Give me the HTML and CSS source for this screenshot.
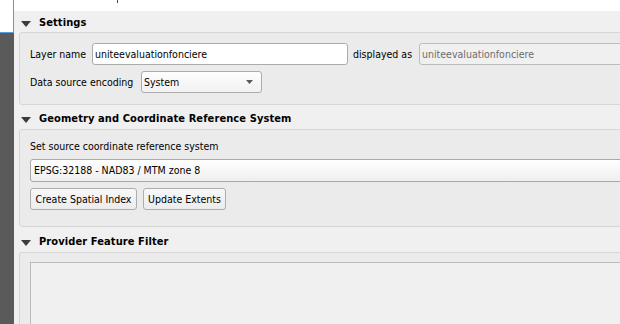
FILE: index.html
```html
<!DOCTYPE html>
<html>
<head>
<meta charset="utf-8">
<link rel="stylesheet" href="styles.css">
</head>
<body>
<div class="screen">
  <div class="side">
    <div class="side-top"></div>
    <div class="side-fill"></div>
  </div>
  <div class="main">
    <div class="topstrip"><span class="tick"></span></div>

    <div class="section-head section-head--first">
      <svg class="caret" width="10" height="6" viewBox="0 0 10 6"><polygon points="0,0 10,0 5,6" fill="#3c3c3c"/></svg>
      <span>Settings</span>
    </div>
    <div class="group group--settings">
      <div class="row">
        <span class="label label--name">Layer name</span>
        <div class="field field--name">uniteevaluationfonciere</div>
        <span class="label label--as">displayed as</span>
        <div class="field field--disabled">uniteevaluationfonciere</div>
      </div>
      <div class="row">
        <span class="label label--enc">Data source encoding</span>
        <div class="combo combo--enc"><span class="combo-text">System</span><svg class="combo-arrow" width="7" height="4" viewBox="0 0 7 4"><polygon points="0,0 7,0 3.5,4" fill="#5a5a5a"/></svg></div>
      </div>
    </div>

    <div class="section-head">
      <svg class="caret" width="10" height="6" viewBox="0 0 10 6"><polygon points="0,0 10,0 5,6" fill="#3c3c3c"/></svg>
      <span>Geometry and Coordinate Reference System</span>
    </div>
    <div class="group group--crs">
      <div class="label label--crs">Set source coordinate reference system</div>
      <div class="combo combo--crs"><span class="combo-text">EPSG:32188 - NAD83 / MTM zone 8</span></div>
      <div class="buttons">
        <div class="btn btn--index">Create Spatial Index</div>
        <div class="btn btn--extents">Update Extents</div>
      </div>
    </div>

    <div class="section-head section-head--filter">
      <svg class="caret" width="10" height="6" viewBox="0 0 10 6"><polygon points="0,0 10,0 5,6" fill="#3c3c3c"/></svg>
      <span>Provider Feature Filter</span>
    </div>
    <div class="group group--filter">
      <div class="textarea"></div>
    </div>
  </div>
</div>
</body>
</html>
```

FILE: styles.css
```css
html, body {
  margin: 0;
  padding: 0;
}
body {
  background: #f0f0f0;
  font-family: "DejaVu Sans Condensed", "DejaVu Sans", sans-serif;
  font-stretch: condensed;
  font-size: 10.5px;
  line-height: 13px;
  color: #000;
}
.screen {
  display: flex;
  width: 620px;
  height: 324px;
  overflow: hidden;
}
.side {
  width: 14px;
  flex-shrink: 0;
  display: flex;
  flex-direction: column;
}
.side-top {
  height: 33px;
  background: #fff;
  border-right: 1px solid #5a9ad8;
  border-bottom: 1px solid #5a9ad8;
  box-sizing: border-box;
}
.side-fill {
  flex: 1;
  background: #5a5a5a;
}
.main {
  flex: 1;
  min-width: 0;
  display: flex;
  flex-direction: column;
  overflow: hidden;
}
.topstrip {
  height: 11px;
  flex-shrink: 0;
  background: #fff;
}
.tick {
  display: block;
  width: 1px;
  height: 3px;
  margin-left: 103px;
  background: #2b4f7c;
}
.section-head {
  display: flex;
  align-items: center;
  gap: 8px;
  height: 24px;
  padding-left: 7px;
  padding-top: 3px;
  box-sizing: border-box;
  flex-shrink: 0;
  font-weight: bold;
  font-size: 11px;
  letter-spacing: 0.1px;
  color: #000;
}
.section-head--first {
  height: 21px;
  padding-top: 1px;
}
.section-head--filter {
  height: 25px;
}
.caret {
  display: block;
  margin-top: 3px;
}
.group {
  margin-left: 5px;
  width: 640px;
  box-sizing: border-box;
  flex-shrink: 0;
  border: 1px solid #d6d6d6;
  border-radius: 3px;
  background: #ebebeb;
  padding: 10px 10px;
}
.group--settings {
  display: flex;
  flex-direction: column;
  gap: 6px;
  padding-bottom: 11px;
}
.row {
  display: flex;
  align-items: center;
  height: 22px;
}
.label {
  white-space: nowrap;
  flex-shrink: 0;
}
.label--name { width: 62px; }
.label--as { width: 66px; margin-left: 5px; }
.label--enc { width: 111px; }
.field {
  height: 22px;
  box-sizing: border-box;
  border: 1px solid #acacac;
  border-radius: 3px;
  background: #fff;
  padding: 0 2px;
  line-height: 20px;
  white-space: nowrap;
  overflow: hidden;
}
.field--name { width: 256px; }
.field--disabled {
  flex: 1;
  background: #f0f0f0;
  border-color: #bcbcbc;
  color: #6d6d6d;
  border-top-right-radius: 0;
  border-bottom-right-radius: 0;
}
.combo {
  height: 22px;
  box-sizing: border-box;
  border: 1px solid #acacac;
  border-radius: 3px;
  background: linear-gradient(#fefefe, #f1f1f1);
  display: flex;
  align-items: center;
  white-space: nowrap;
}
.combo--enc {
  width: 121px;
  padding-left: 2px;
}
.combo-text {
  flex: 1;
}
.combo-arrow {
  display: block;
  margin-right: 8px;
}
.group--crs {
  display: flex;
  flex-direction: column;
  padding-bottom: 16px;
}
.label--crs {
  height: 13px;
}
.combo--crs {
  margin-top: 6px;
  height: 23px;
  padding-left: 3px;
  border-color: #a9a9a9;
  background: linear-gradient(#ffffff, #efefef);
}
.buttons {
  display: flex;
  gap: 6px;
  margin-top: 6px;
}
.btn {
  height: 22px;
  box-sizing: border-box;
  border: 1px solid #adadad;
  border-radius: 3px;
  background: linear-gradient(#f8f8f8, #ececec);
  display: flex;
  align-items: center;
  justify-content: center;
  white-space: nowrap;
}
.btn--index { width: 107px; }
.btn--extents { width: 83px; }
.group--filter {
  flex: 1;
  display: flex;
  flex-direction: column;
  padding: 9px 0 0 10px;
  border-bottom: none;
  border-bottom-left-radius: 0;
}
.textarea {
  flex: 1;
  border: 1px solid #bababa;
  border-bottom: none;
  background: #f0f0f0;
}
```
